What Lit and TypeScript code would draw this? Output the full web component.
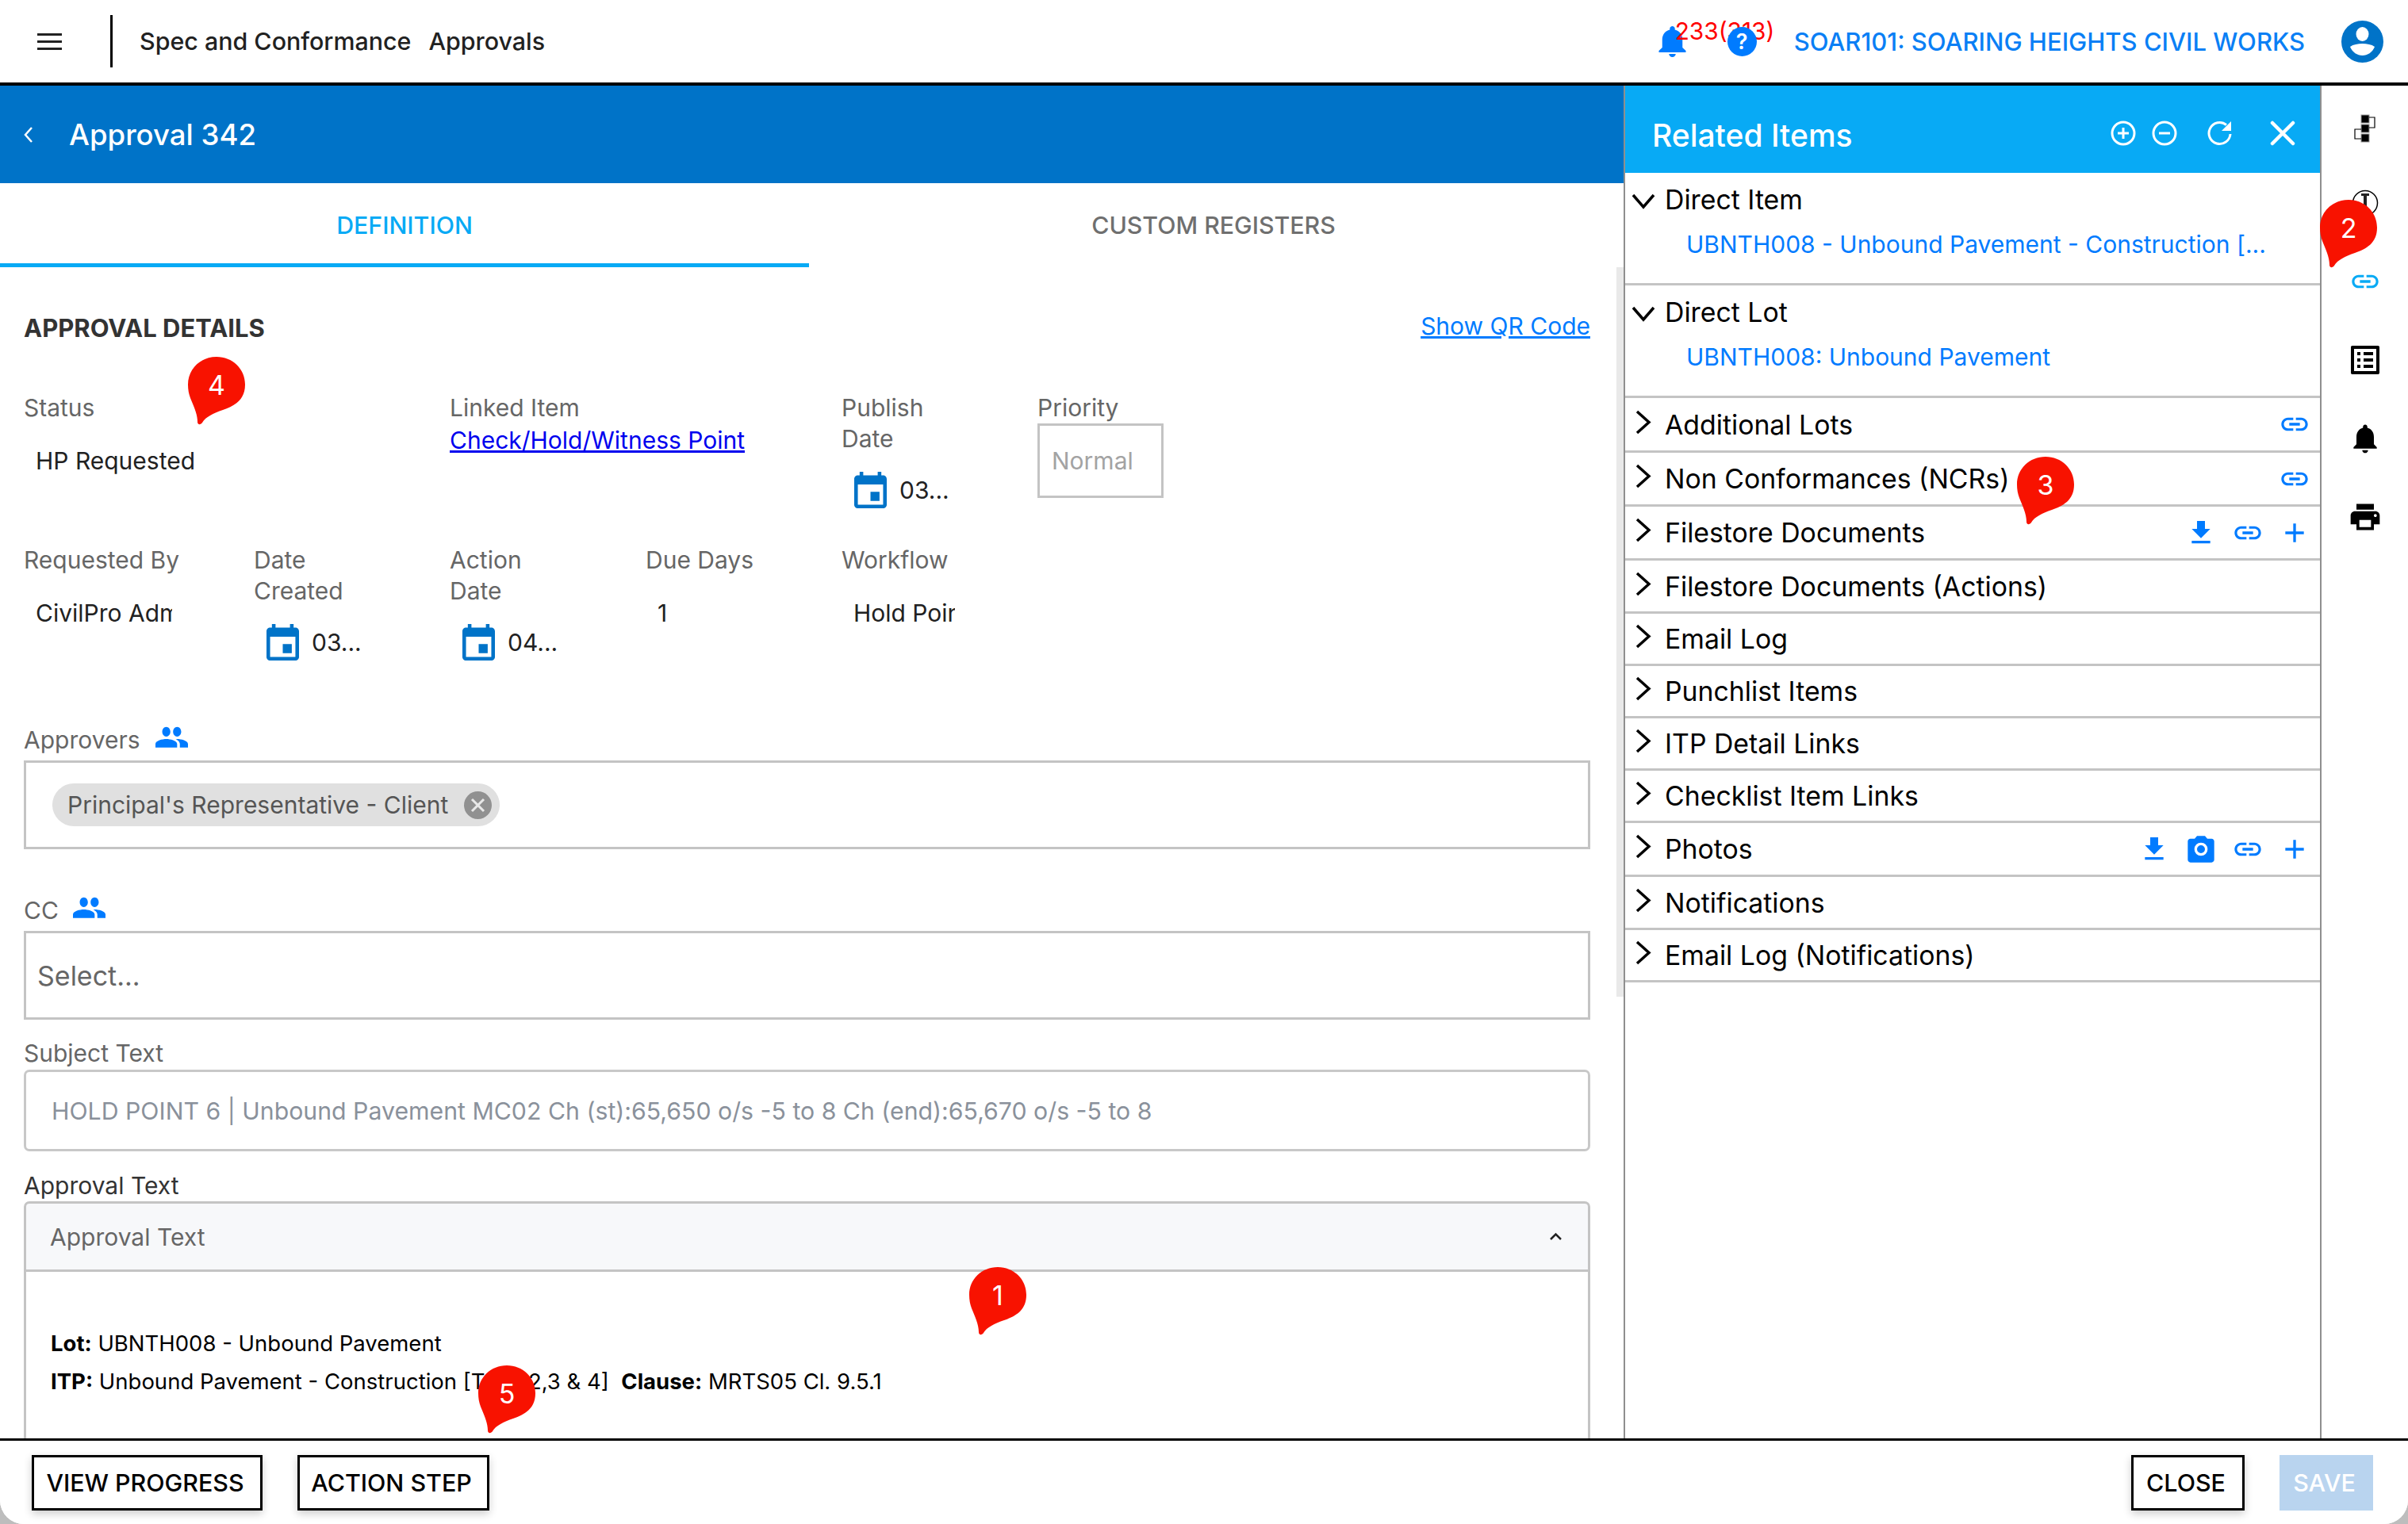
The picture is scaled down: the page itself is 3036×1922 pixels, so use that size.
import { LitElement, html, css, svg } from "lit";
import { customElement } from "lit/decorators.js";

const LINK = svg`<path d="M3.9 12c0-1.7 1.4-3.1 3.1-3.1h4V7H7c-2.8 0-5 2.2-5 5s2.2 5 5 5h4v-1.9H7c-1.7 0-3.1-1.4-3.1-3.1zM8 13h8v-2H8v2zm9-6h-4v1.9h4c1.7 0 3.1 1.4 3.1 3.1s-1.4 3.1-3.1 3.1h-4V17h4c2.8 0 5-2.2 5-5s-2.2-5-5-5z"/>`;
const DOWNLOAD = svg`<path d="M19 9h-4V3H9v6H5l7 7 7-7zM5 18v2h14v-2H5z"/>`;
const PLUS = svg`<path d="M19 13h-6v6h-2v-6H5v-2h6V5h2v6h6v2z"/>`;
const CAMERA = svg`<path d="M9 2 7.2 4H4C2.9 4 2 4.9 2 6v14c0 1.1.9 2 2 2h16c1.1 0 2-.9 2-2V6c0-1.100-.9-2-2-2h-3.200L15 2H9zm3 15a5 5 0 1 1 0-10 5 5 0 0 1 0 10zm0-2a3 3 0 1 0 0-6 3 3 0 0 0 0 6z"/>`;
const PEOPLE = svg`<path d="M16 11c1.700 0 3-1.800 3-4s-1.300-4-3-4-3 1.800-3 4 1.300 4 3 4zM8 11c1.700 0 3-1.800 3-4S9.700 3 8 3 5 4.800 5 7s1.300 4 3 4zm0 2c-2.800 0-8 1.300-8 4v3h16v-3c0-2.700-5.200-4-8-4zm8 0h-1c1.200.9 3 2.200 3 4v3h6v-3c0-2.700-5.200-4-8-4z"/>`;
const CALENDAR = svg`<path d="M17 12h-5v5h5v-5zM16 1v2H8V1H6v2H5C3.900 3 3 3.900 3 5v14c0 1.100.9 2 2 2h14c1.100 0 2-.9 2-2V5c0-1.100-.9-2-2-2h-1V1h-2zm3 18H5V8h14v11z"/>`;
const BELL = svg`<path d="M12 22c1.100 0 2-.9 2-2h-4c0 1.100.9 2 2 2zm6-6v-5c0-3.100-1.600-5.600-4.500-6.300V4c0-.8-.7-1.500-1.500-1.500s-1.500.7-1.500 1.500v.7C7.600 5.400 6 7.900 6 11v5l-2 2v1h16v-1l-2-2z"/>`;
const PRINT = svg`<path d="M19 8H5c-1.700 0-3 1.300-3 3v6h4v4h12v-4h4v-6c0-1.700-1.300-3-3-3zm-3 11H8v-5h8v5zm3-7c-.6 0-1-.4-1-1s.4-1 1-1 1 .4 1 1-.4 1-1 1zm-1-9H6v4h12V3z"/>`;
const LIST = svg`<path d="M11 7h6v2h-6zm0 4h6v2h-6zm0 4h6v2h-6zM7 7h2v2H7zm0 4h2v2H7zm0 4h2v2H7zM20.100 3H3.900c-.5 0-.9.4-.9.9v16.200c0 .4.4.9.9.9h16.200c.4 0 .9-.5.900-.9V3.900c0-.5-.5-.9-.9-.9zM19 19H5V5h14v14z"/>`;

const icon = (path: unknown, cls = "", box = "0 0 24 24") =>
  html`<svg class="icon ${cls}" viewBox=${box} preserveAspectRatio="none" fill="currentColor">${path}</svg>`;

type Row = { label: string; h: number; tools?: unknown[] };

// row heights differ by a pixel or so in the reference
const ROWS: Row[] = [
  { label: "Additional Lots", h: 69, tools: [LINK] },
  { label: "Non Conformances (NCRs)", h: 68, tools: [LINK] },
  { label: "Filestore Documents", h: 68, tools: [DOWNLOAD, LINK, PLUS] },
  { label: "Filestore Documents (Actions)", h: 67 },
  { label: "Email Log", h: 66 },
  { label: "Punchlist Items", h: 66 },
  { label: "ITP Detail Links", h: 66 },
  { label: "Checklist Item Links", h: 66 },
  { label: "Photos", h: 68, tools: [DOWNLOAD, CAMERA, LINK, PLUS] },
  { label: "Notifications", h: 67 },
  { label: "Email Log (Notifications)", h: 66 }
];

const PINS = [
  { n: 1, x: 1222, y: 1598 },
  { n: 2, x: 2925, y: 252 },
  { n: 3, x: 2543, y: 576 },
  { n: 4, x: 237, y: 450 },
  { n: 5, x: 603, y: 1722 }
];

@customElement("app-root")
export class AppRoot extends LitElement {
  static styles = css`
    :host {
      display: block;
      position: relative;
      width: 3036px;
      height: 1922px;
      overflow: hidden;
      font-family: Inter, "Liberation Sans", sans-serif;
      font-size: 30px;
      color: #212529;
      background: #bdbdbd;
    }

    .icon {
      display: block;
      flex: none;
    }

    .window {
      display: flex;
      flex-direction: column;
      height: 100%;
      background: #fff;
      border-radius: 0 0 30px 30px;
      overflow: hidden;
    }

    /* top bar */
    .topbar {
      display: flex;
      align-items: center;
      flex: none;
      height: 108px;
      box-sizing: border-box;
      border-bottom: 4px solid #000;
    }

    .burger {
      width: 31px;
      height: 21px;
      margin-left: 47px;
      border-top: 3px solid #222;
      border-bottom: 3px solid #222;
      position: relative;
      box-sizing: border-box;
    }

    .burger::after {
      content: "";
      position: absolute;
      left: 0;
      right: 0;
      top: 6px;
      height: 3px;
      background: #222;
    }

    .divider {
      width: 3px;
      height: 66px;
      margin: 0 34px 0 61px;
      background: #000;
    }

    .crumbs {
      display: flex;
      gap: 22px;
      font-size: 30.4px;
      font-weight: 500;
      color: #212121;
    }

    .top-right {
      display: flex;
      align-items: center;
      margin-left: auto;
    }

    .alerts {
      position: relative;
      width: 171px;
      height: 104px;
      color: #007bff;
    }

    .alerts .bell {
      position: absolute;
      left: -8px;
      top: 28px;
      width: 51px;
      height: 48px;
    }

    .alerts .count {
      position: absolute;
      left: 21px;
      top: 22px;
      font-size: 29.8px;
      line-height: 34px;
      color: #f00;
      white-space: nowrap;
    }

    .alerts .help {
      position: absolute;
      left: 87px;
      top: 34px;
      width: 37px;
      height: 37px;
      border-radius: 50%;
      background: #007bff;
      color: #fff;
      font-size: 27px;
      font-weight: 600;
      line-height: 37px;
      text-align: center;
    }

    .company {
      font-size: 31px;
      font-weight: 500;
      color: #0a7ff5;
      white-space: nowrap;
    }

    .avatar {
      width: 53px;
      height: 53px;
      margin: 0 31px 0 46px;
    }

    /* middle */
    .middle {
      display: flex;
      flex: 1;
      min-height: 0;
    }

    .main {
      display: flex;
      flex-direction: column;
      width: 2047px;
      flex: none;
      min-height: 0;
    }

    .page-head {
      display: flex;
      align-items: center;
      flex: none;
      height: 123px;
      padding-left: 30px;
      background: #0073c8;
      color: #fff;
      font-size: 36.6px;
      font-weight: 500;
    }

    .page-head svg {
      width: 12px;
      height: 22px;
      margin-right: 45px;
    }

    .tabs {
      display: flex;
      flex: none;
      height: 106px;
      font-weight: 500;
      font-size: 30.3px;
    }

    .tab {
      display: flex;
      align-items: center;
      justify-content: center;
      width: 1020px;
      box-sizing: border-box;
      padding-top: 5px;
      color: #6f6f6f;
      border-bottom: 5px solid transparent;
    }

    .tab.on {
      color: #08aaf5;
      border-bottom-color: #08aaf5;
    }

    .form {
      position: relative;
      flex: 1;
      min-height: 0;
      padding: 0 42px 0 30px;
      overflow: hidden;
    }

    .form::after {
      content: "";
      position: absolute;
      top: 0;
      right: 0;
      width: 9px;
      height: 920px;
      background: #e9e9e9;
    }

    .section-head {
      display: flex;
      align-items: center;
      justify-content: space-between;
      height: 79px;
      padding-top: 37px;
    }

    .section-head strong {
      font-size: 31px;
      font-weight: 700;
      color: #333;
    }

    .qr {
      color: #007bff;
      margin-top: -6px;
      text-decoration: underline;
    }

    .grid {
      display: grid;
      grid-template-columns: 290px repeat(4, 247px) 300px;
      grid-template-rows: 192px 226px;
      margin-top: 42px;
      line-height: 39px;
    }

    .label {
      color: #666;
    }

    .wide {
      grid-column: span 2;
    }

    .value {
      margin: 28px 0 0 15px;
      color: #212121;
      overflow: hidden;
      white-space: nowrap;
    }

    .clip {
      width: 172px;
    }

    .clip.short {
      width: 128px;
    }

    .linked {
      display: block;
      margin-top: 2px;
      color: #00e;
      text-decoration: underline;
    }

    .date {
      display: flex;
      align-items: center;
      gap: 16px;
      margin: 22px 0 0 16px;
      color: #212121;
    }

    .date .icon {
      width: 41px;
      height: 46px;
      color: #0073c8;
    }

    .priority {
      width: 159px;
      height: 94px;
      padding: 0 15px;
      box-sizing: border-box;
      border: 3px solid #c4c4c4;
      color: #a3a3a3;
      line-height: 88px;
    }

    .with-icon {
      display: flex;
      align-items: center;
      gap: 19px;
      height: 40px;
      line-height: 40px;
      color: #666;
    }

    .with-icon.cc {
      margin-top: 57px;
      gap: 18px;
    }

    .with-icon .icon {
      width: 41px;
      height: 37px;
      color: #007bff;
      margin-top: -6px;
    }

    .box {
      display: flex;
      align-items: center;
      height: 112px;
      box-sizing: border-box;
      border: 3px solid #c4c4c4;
      margin-top: 6px;
    }

    .chip {
      display: flex;
      align-items: center;
      gap: 20px;
      height: 54px;
      margin-left: 33px;
      padding: 0 10px 0 19px;
      border-radius: 27px;
      background: #e0e0e0;
      color: #555;
    }

    .chip-x {
      width: 35px;
      height: 35px;
    }

    .placeholder {
      padding-left: 14px;
      font-size: 34px;
      color: #666;
    }

    .subject-label {
      margin-top: 22px;
      color: #666;
      line-height: 40px;
    }

    .subject {
      display: flex;
      align-items: center;
      height: 103px;
      padding-left: 32px;
      box-sizing: border-box;
      border: 3px solid #c8c8c8;
      border-radius: 7px;
      margin-top: 1px;
      font-size: 30.25px;
      color: #8a919b;
    }

    .approval-label {
      margin-top: 23px;
      line-height: 40px;
      color: #333;
    }

    .editor-head {
      display: flex;
      align-items: center;
      justify-content: space-between;
      height: 89px;
      padding: 0 32px 0 30px;
      box-sizing: border-box;
      border: 3px solid #c4c4c4;
      border-radius: 7px 7px 0 0;
      background: #f7f8fa;
      color: #666;
    }

    .editor-head svg {
      width: 17px;
      height: 11px;
    }

    .editor-body {
      height: 300px;
      padding: 66px 0 0 31px;
      box-sizing: border-box;
      border: solid #c4c4c4;
      border-width: 0 3px;
      color: #000;
      font-size: 27.5px;
      line-height: 48px;
    }

    /* related items */
    .panel {
      display: flex;
      flex-direction: column;
      width: 880px;
      flex: none;
      box-sizing: border-box;
      border-left: 2px solid #8f8f8f;
      border-right: 2px solid #8f8f8f;
    }

    .panel-head {
      display: flex;
      align-items: center;
      flex: none;
      height: 110px;
      padding: 14px 31px 0 34px;
      box-sizing: border-box;
      background: #08aaf5;
      color: #fff;
      font-size: 39px;
      font-weight: 500;
    }

    .head-tools {
      display: flex;
      align-items: center;
      margin: -4px 0 0 auto;
      height: 40px;
    }

    .head-tools svg {
      width: 32px;
      height: 32px;
      margin-left: 20px;
    }

    .head-tools svg.gap {
      margin-left: 38px;
    }

    .head-tools svg.wide-gap {
      margin-left: 47px;
    }

    .row {
      display: flex;
      align-items: center;
      gap: 15px;
      padding: 0 12px 0 11px;
      border-bottom: 3px solid #c4c4c4;
      box-sizing: border-box;
      color: #000;
      font-size: 33.8px;
    }

    .row .chev {
      width: 24px;
      height: 31px;
      margin-top: -6px;
    }

    .direct {
      height: 142px;
      border-bottom: 3px solid #c4c4c4;
      box-sizing: border-box;
      color: #000;
      font-size: 33.8px;
    }

    .direct-title {
      display: flex;
      align-items: center;
      gap: 12px;
      height: 62px;
      padding: 4px 0 0 8px;
      box-sizing: border-box;
    }

    .direct-title svg {
      width: 30px;
      height: 24px;
      margin-top: 4px;
    }

    .direct-link {
      display: block;
      margin: 10px 0 0 77px;
      font-size: 30px;
      color: #007bff;
    }

    .row-tools {
      display: flex;
      align-items: center;
      gap: 19px;
      margin-left: auto;
      color: #007bff;
    }

    .row-tools .icon {
      width: 40px;
      height: 40px;
    }

    /* sidebar */
    .side {
      display: flex;
      flex-direction: column;
      align-items: center;
      flex: 1;
      padding-top: 10px;
    }

    .side-slot {
      display: flex;
      align-items: center;
      justify-content: center;
      height: 99px;
      color: #000;
    }

    .side-slot.first {
      height: 88.5px;
    }

    .side-slot .icon {
      width: 44px;
      height: 44px;
    }

    .side-slot .icon.small {
      width: 40px;
      height: 40px;
    }

    .side-slot .icon.large {
      width: 48px;
      height: 48px;
    }

    .side-slot.on {
      color: #08aaf5;
    }

    /* footer */
    .footer {
      display: flex;
      align-items: center;
      gap: 44px;
      flex: none;
      height: 108px;
      padding: 0 44px 0 40px;
      box-sizing: border-box;
      border-top: 3px solid #000;
      background: #fff;
    }

    .btn {
      display: flex;
      align-items: center;
      justify-content: center;
      height: 70px;
      padding-right: 5px;
      box-sizing: border-box;
      border: 3px solid #000;
      color: #000;
      font-size: 30.4px;
      font-weight: 500;
      box-shadow: 0 4px 10px rgba(0, 0, 0, 0.2);
    }

    .btn.view {
      width: 291px;
    }

    .btn.action {
      width: 242px;
    }

    .btn.close {
      width: 143px;
      margin-left: auto;
    }

    .btn.save {
      width: 118px;
      border: none;
      background: #b9d4ef;
      color: #fff;
      box-shadow: none;
    }

    /* tour markers */
    .pin {
      position: absolute;
      width: 72px;
      height: 86px;
      color: #fff;
      font-size: 34px;
      line-height: 72px;
      text-align: center;
    }

    .pin svg {
      position: absolute;
      inset: 0;
      width: 100%;
      height: 100%;
    }

    .pin span {
      position: relative;
    }
  `;

  render() {
    return html`
      <div class="window">
        ${this.renderTopbar()}
        <div class="middle">
          <div class="main">
            <div class="page-head">
              <svg viewBox="0 0 12 22" fill="none" stroke="currentColor" stroke-width="2.5"><path d="M10 2 2 11l8 9" /></svg>
              Approval 342
            </div>
            <div class="tabs">
              <div class="tab on">DEFINITION</div>
              <div class="tab">CUSTOM REGISTERS</div>
            </div>
            ${this.renderForm()}
          </div>
          ${this.renderPanel()} ${this.renderSide()}
        </div>
        <div class="footer">
          <div class="btn view">VIEW PROGRESS</div>
          <div class="btn action">ACTION STEP</div>
          <div class="btn close">CLOSE</div>
          <div class="btn save">SAVE</div>
        </div>
      </div>
      ${PINS.map((p) => this.renderPin(p.n, p.x, p.y))}
    `;
  }

  renderTopbar() {
    return html`
      <div class="topbar">
        <div class="burger"></div>
        <div class="divider"></div>
        <div class="crumbs"><span>Spec and Conformance</span><span>Approvals</span></div>
        <div class="top-right">
          <div class="alerts">
            ${icon(BELL, "bell")}
            <span class="count">233(313)</span>
            <span class="help">?</span>
          </div>
          <div class="company">SOAR101: SOARING HEIGHTS CIVIL WORKS</div>
          <svg class="avatar" viewBox="0 0 53 53">
            <circle cx="26.5" cy="26.5" r="26.5" fill="#0073c8" />
            <ellipse cx="26.5" cy="17" rx="8" ry="9" fill="#fff" />
            <path d="M11 33c4-3 10-4 15.500-4S38 30 42 33c-3 7-9 11-15.500 11S14 40 11 33z" fill="#fff" />
          </svg>
        </div>
      </div>
    `;
  }

  renderForm() {
    const cal = icon(CALENDAR, "", "3 1 18 20");
    return html`
      <div class="form">
        <div class="section-head">
          <strong>APPROVAL DETAILS</strong>
          <span class="qr">Show QR Code</span>
        </div>
        <div class="grid">
          <div class="wide">
            <div class="label">Status</div>
            <div class="value">HP Requested</div>
          </div>
          <div class="wide">
            <div class="label">Linked Item</div>
            <span class="linked">Check/Hold/Witness Point</span>
          </div>
          <div>
            <div class="label">Publish<br />Date</div>
            <div class="date">${cal}03...</div>
          </div>
          <div>
            <div class="label">Priority</div>
            <div class="priority">Normal</div>
          </div>
          <div>
            <div class="label">Requested By</div>
            <div class="value clip">CivilPro Admin</div>
          </div>
          <div>
            <div class="label">Date<br />Created</div>
            <div class="date">${cal}03...</div>
          </div>
          <div>
            <div class="label">Action<br />Date</div>
            <div class="date">${cal}04...</div>
          </div>
          <div>
            <div class="label">Due Days</div>
            <div class="value">1</div>
          </div>
          <div>
            <div class="label">Workflow</div>
            <div class="value clip short">Hold Point</div>
          </div>
        </div>
        <div class="with-icon">Approvers ${icon(PEOPLE)}</div>
        <div class="box">
          <div class="chip">
            Principal's Representative - Client
            <svg class="chip-x" viewBox="0 0 35 35">
              <circle cx="17.5" cy="17.5" r="17.5" fill="#919191" />
              <path d="M10 10l15 15M25 10 10 25" stroke="#e8e8e8" stroke-width="3" />
            </svg>
          </div>
        </div>
        <div class="with-icon cc">CC ${icon(PEOPLE)}</div>
        <div class="box"><span class="placeholder">Select...</span></div>
        <div class="subject-label">Subject Text</div>
        <div class="subject">HOLD POINT 6 | Unbound Pavement MC02 Ch (st):65,650 o/s -5 to 8 Ch (end):65,670 o/s -5 to 8</div>
        <div class="approval-label">Approval Text</div>
        <div class="editor-head">
          Approval Text
          <svg viewBox="0 0 17 11" fill="none" stroke="#222" stroke-width="2.5"><path d="M2 9l6.500-6.500L15 9" /></svg>
        </div>
        <div class="editor-body">
          <div><b>Lot:</b> UBNTH008 - Unbound Pavement</div>
          <div><b>ITP:</b> Unbound Pavement - Construction [Type 2,3 &amp; 4]&nbsp; <b>Clause:</b> MRTS05 Cl. 9.5.1</div>
        </div>
      </div>
    `;
  }

  renderPanel() {
    const right = html`<svg class="chev" viewBox="0 0 24 31" fill="none" stroke="currentColor" stroke-width="3.5"><path d="M4 2l15 13.500L4 29" /></svg>`;
    const down = html`<svg viewBox="0 0 30 24" fill="none" stroke="currentColor" stroke-width="3.5"><path d="M2 5l13 15L28 5" /></svg>`;
    return html`
      <div class="panel">
        <div class="panel-head">
          Related Items
          <div class="head-tools">
            <svg viewBox="0 0 32 32" fill="none" stroke="#fff" stroke-width="3"><circle cx="16" cy="16" r="14" /><path d="M16 9v14M9 16h14" /></svg>
            <svg viewBox="0 0 32 32" fill="none" stroke="#fff" stroke-width="3"><circle cx="16" cy="16" r="14" /><path d="M9 16h14" /></svg>
            <svg class="gap" viewBox="0 0 32 32" fill="none" stroke="#fff" stroke-width="3"><path d="M29 17A13.500 13.500 0 1 1 24 5.500" /><path d="M30 1v12H18z" fill="#fff" stroke="none" /></svg>
            <svg class="wide-gap" viewBox="0 0 32 32" fill="none" stroke="#fff" stroke-width="4.5" stroke-linecap="round"><path d="M3 3l26 26M29 3 3 29" /></svg>
          </div>
        </div>
        <div class="direct">
          <div class="direct-title">${down}Direct Item</div>
          <span class="direct-link">UBNTH008 - Unbound Pavement - Construction [...</span>
        </div>
        <div class="direct">
          <div class="direct-title">${down}Direct Lot</div>
          <span class="direct-link">UBNTH008: Unbound Pavement</span>
        </div>
        ${ROWS.map(
          (r) => html`
            <div class="row" style="height:${r.h}px">
              ${right}<span>${r.label}</span>
              ${r.tools
                ? html`<div class="row-tools">${r.tools.map((t) => icon(t))}</div>`
                : ""}
            </div>
          `
        )}
      </div>
    `;
  }

  renderSide() {
    return html`
      <div class="side">
        <div class="side-slot first">
          <svg class="icon small" viewBox="0 0 40 40">
            <rect x="15" y="3" width="10" height="10" fill="#000" stroke="#999" />
            <rect x="15" y="15" width="10" height="10" fill="#000" stroke="#999" />
            <rect x="15" y="27" width="10" height="10" fill="#000" stroke="#999" />
            <path d="M25 6h7v13h-7M15 21H7v12h8" fill="none" stroke="#000" stroke-width="1.2" />
          </svg>
        </div>
        <div class="side-slot">
          <svg class="icon small" viewBox="0 0 40 40">
            <circle cx="20" cy="20" r="15.500" fill="none" stroke="#000" stroke-width="1.5" />
            <path d="M15 8h10v3h-3v18h3v3H15v-3h3V11h-3z" fill="#222" />
          </svg>
        </div>
        <div class="side-slot on">${icon(LINK, "small")}</div>
        <div class="side-slot">${icon(LIST, "large")}</div>
        <div class="side-slot">${icon(BELL)}</div>
        <div class="side-slot">${icon(PRINT)}</div>
      </div>
    `;
  }

  renderPin(n: number, x: number, y: number) {
    return html`
      <div class="pin" style="left:${x}px;top:${y}px">
        <svg viewBox="0 0 72 86">
          <path d="M36 0C56 0 72 15 72 35 72 55 58 62 44 67 32 71 22 76 18 83 16 86 12 86 12 82 12 72 7 62 3 52 1 47 0 41 0 35 0 15 16 0 36 0Z" fill="#f81200" />
        </svg>
        <span>${n}</span>
      </div>
    `;
  }
}
